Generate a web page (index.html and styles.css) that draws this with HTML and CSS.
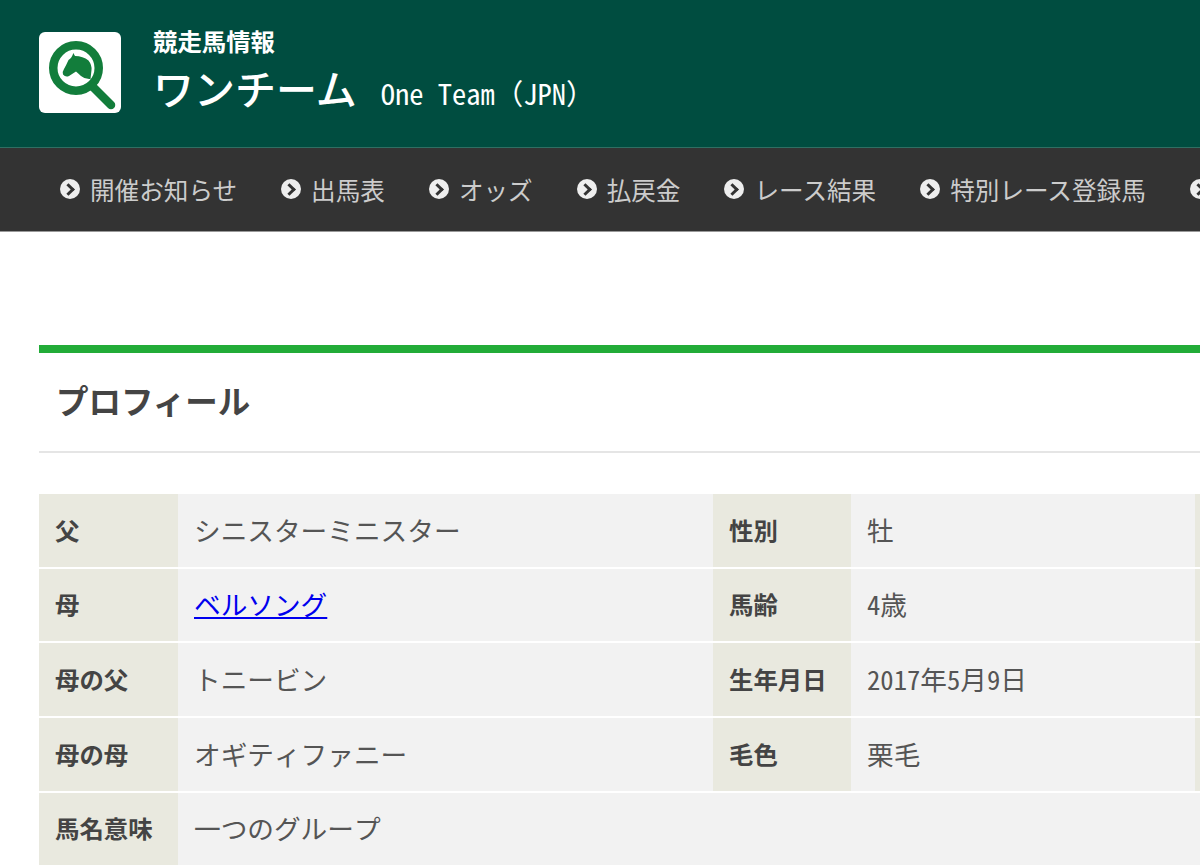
FILE: index.html
```html
<!DOCTYPE html>
<html lang="ja">
<head>
  <meta charset="UTF-8">
  <title>ワンチーム One Team (JPN)</title>
  <link rel="stylesheet" href="styles.css">
</head>
<body>

<header class="site-header">
  <div class="logo">
    <svg viewBox="0 0 82 81" width="82" height="81">
      <circle cx="37" cy="36" r="22.75" fill="none" stroke="#127d3b" stroke-width="8.5"/>
      <path d="M54 55 L72 73" fill="none" stroke="#127d3b" stroke-width="8.5" stroke-linecap="round"/>
      <path d="M34.3 21 L36 24 Q44 24 49.5 28.5 Q53 33 52.5 38 L51.5 47 Q46 47.5 42 44 Q39 41 37 39.5 L30 44 Q26.5 45.5 24 42.5 Q23 40 25 37 Q27.5 32.5 29.5 28 Q33 26 34.3 21 Z" fill="#127d3b"/>
    </svg>
  </div>
  <div class="titles">
    <p class="site-name">競走馬情報</p>
    <h1>ワンチーム<span class="name-en">One Team（JPN）</span></h1>
  </div>
</header>

<nav class="main-nav">
  <a href="#"><span class="arrow"></span>開催お知らせ</a>
  <a href="#"><span class="arrow"></span>出馬表</a>
  <a href="#"><span class="arrow"></span>オッズ</a>
  <a href="#"><span class="arrow"></span>払戻金</a>
  <a href="#"><span class="arrow"></span>レース結果</a>
  <a href="#"><span class="arrow"></span>特別レース登録馬</a>
  <a href="#"><span class="arrow"></span></a>
</nav>

<main class="content">
  <section class="profile">
    <h2>プロフィール</h2>
    <div class="profile-grid">
      <div class="th">父</div>
      <div class="td">シニスターミニスター</div>
      <div class="th">性別</div>
      <div class="td">牡</div>
      <div class="th"></div>
      <div class="td"></div>

      <div class="th">母</div>
      <div class="td"><a href="#">ベルソング</a></div>
      <div class="th">馬齢</div>
      <div class="td">4歳</div>
      <div class="th"></div>
      <div class="td"></div>

      <div class="th">母の父</div>
      <div class="td">トニービン</div>
      <div class="th">生年月日</div>
      <div class="td">2017年5月9日</div>
      <div class="th"></div>
      <div class="td"></div>

      <div class="th">母の母</div>
      <div class="td">オギティファニー</div>
      <div class="th">毛色</div>
      <div class="td">栗毛</div>
      <div class="th"></div>
      <div class="td"></div>

      <div class="th">馬名意味</div>
      <div class="td wide">一つのグループ</div>
    </div>
  </section>
</main>

</body>
</html>
```

FILE: styles.css
```css
html, body {
  overflow: hidden;
}
body {
  margin: 0;
  width: 1600px;
  background-color: #fff;
  color: #444;
  font-family: "Noto Sans CJK JP", sans-serif;
}
.site-header {
  display: flex;
  align-items: flex-start;
  gap: 32px;
  height: 147px;
  padding: 0 39px;
  background-color: #004d40;
  border-bottom: 1px solid #2f6f63;
  color: #fff;
}
.logo {
  width: 82px;
  height: 81px;
  margin-top: 32px;
  background-color: #fff;
  border-radius: 6px;
}
.logo svg {
  display: block;
}
.site-name {
  margin: 22px 0 0;
  font-size: 24.4px;
  line-height: 38px;
  font-weight: bold;
}
h1 {
  margin: 2px 0 0;
  font-size: 41px;
  line-height: 50px;
  font-weight: 500;
}
.name-en {
  margin-left: 24px;
  font-family: "Noto Sans Mono CJK JP", "Liberation Mono", "Noto Sans CJK JP", monospace;
  font-size: 28.5px;
  font-weight: 500;
}
.main-nav {
  display: flex;
  align-items: center;
  gap: 44px;
  height: 81px;
  padding: 0 0 2px 60px;
  background-color: #333;
  border-bottom: 1px solid #999;
}
.main-nav a {
  display: flex;
  align-items: center;
  gap: 10px;
  color: #ccc;
  font-size: 24.6px;
  text-decoration: none;
  white-space: nowrap;
}
.arrow {
  position: relative;
  display: block;
  width: 20px;
  height: 20px;
  border-radius: 50%;
  background-color: #eee;
}
.arrow::after {
  content: "";
  position: absolute;
  left: 4px;
  top: 6px;
  width: 6px;
  height: 6px;
  border-top: 3px solid #333;
  border-right: 3px solid #333;
  transform: rotate(45deg);
}
.content {
  padding: 113px 0 0 39px;
}
.profile {
  border-top: 8px solid #22ac38;
}
h2 {
  margin: 0 0 41px;
  padding-left: 17px;
  height: 98px;
  line-height: 94px;
  border-bottom: 2px solid #e5e5e5;
  font-size: 32.5px;
  font-weight: bold;
}
.profile-grid {
  display: grid;
  grid-template-columns: 139px 535px 138px 344px 139px 1fr;
  grid-auto-rows: 72.67px;
  row-gap: 2px;
}
.th, .td {
  display: flex;
  align-items: center;
  padding: 0 0 2px 16px;
}
.th {
  background-color: #e9e9df;
  font-size: 24.4px;
  font-weight: bold;
}
.td {
  background-color: #f2f2f2;
  font-family: "Noto Sans Mono CJK JP", "Noto Sans CJK JP", sans-serif;
  font-size: 26.67px;
  color: #555;
}
.td a {
  color: #00e;
}
.wide {
  grid-column: 2 / -1;
}
```
